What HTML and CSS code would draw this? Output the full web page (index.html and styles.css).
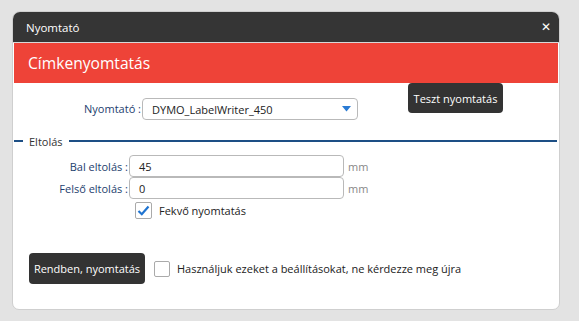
FILE: index.html
```html
<!DOCTYPE html>
<html lang="hu">
<head>
<meta charset="utf-8">
<link rel="stylesheet" href="styles.css">
</head>
<body>
<div class="dialog">
  <div class="titlebar">
    <span class="title">Nyomtató</span>
    <span class="close">✕</span>
  </div>
  <div class="header">Címkenyomtatás</div>
  <div class="printer-row">
    <label class="lbl lbl-printer">Nyomtató :</label>
    <div class="select">
      <span>DYMO_LabelWriter_450</span>
      <svg class="arrow" width="9" height="6" viewBox="0 0 9 6"><path d="M0 0H9L4.5 5.5Z" fill="#2a7bd4"/></svg>
    </div>
    <button class="btn btn-test">Teszt nyomtatás</button>
  </div>
  <div class="legend"><span>Eltolás</span></div>
  <div class="offsets">
    <label class="lbl">Bal eltolás :</label>
    <div class="input">45</div>
    <span class="unit">mm</span>
    <label class="lbl">Felső eltolás :</label>
    <div class="input">0</div>
    <span class="unit">mm</span>
  </div>
  <div class="check-row">
    <span class="cb">
      <svg width="13" height="11" viewBox="0 0 13 11"><path d="M1.5 6L4.8 9.2L11.5 1.5" fill="none" stroke="#1f74d1" stroke-width="2.2"/></svg>
    </span>
    <span class="cb-text">Fekvő nyomtatás</span>
  </div>
  <div class="footer">
    <button class="btn btn-ok">Rendben, nyomtatás</button>
    <span class="cb cb-empty"></span>
    <span class="cb-text">Használjuk ezeket a beállításokat, ne kérdezze meg újra</span>
  </div>
</div>
</body>
</html>
```

FILE: styles.css
```css
* { box-sizing: border-box; }
html, body { margin: 0; padding: 0; }
body {
  background: #e3e3e3;
  font-family: "Open Sans", "Noto Sans", sans-serif;
  font-size: 11px;
  color: #222;
  padding: 11px 0 0 12px;
  height: 321px;
  overflow: hidden;
}
.dialog {
  width: 548px;
  height: 299px;
  background: #fff;
  border: 1px solid #cfcfcf;
  border-radius: 8px 8px 7px 7px;
  overflow: hidden;
}
.titlebar {
  height: 31px;
  background: #353535;
  color: #fff;
  display: flex;
  align-items: center;
  justify-content: space-between;
  padding: 0 8px 0 13px;
  border-bottom: 1px solid #d8d8d8;
}
.title { font-size: 11.5px; }
.close { font-size: 12px; font-weight: bold; font-family: "DejaVu Sans", sans-serif; }
.header {
  margin: 0 1px;
  height: 40px;
  background: #ee4338;
  color: #fff;
  font-size: 15.6px;
  display: flex;
  align-items: center;
  padding-left: 14px;
}
.printer-row {
  display: flex;
  align-items: flex-start;
  height: 30px;
}
.lbl {
  color: #1d3e6e;
  text-align: right;
  font-size: 11px;
}
.lbl-printer {
  width: 129px;
  margin-top: 18px;
  padding-right: 1px;
}
.select {
  margin-top: 15px;
  width: 216px;
  height: 22px;
  border: 1px solid #b9b9b9;
  border-radius: 4px;
  display: flex;
  align-items: center;
  justify-content: space-between;
  padding: 0 6px 0 9px;
  color: #222;
}
.arrow { margin-top: -1px; }
.btn {
  background: #333;
  color: #fff;
  border: none;
  border-radius: 4px;
  font-family: "Open Sans", "Noto Sans", sans-serif;
  font-size: 11px;
  padding: 0;
}
.btn-test {
  margin-left: 50px;
  width: 95px;
  height: 30px;
}
.legend {
  display: flex;
  align-items: center;
  margin: 19px 2px 0 1px;
  height: 18px;
  color: #333;
}
.legend::before, .legend::after {
  content: "";
  height: 1.5px;
  background: #1d4f85;
}
.legend::before { width: 9px; }
.legend::after { flex: 1; }
.legend span { padding: 0 6px 0 6px; }
.offsets {
  margin-top: 5px;
  display: grid;
  grid-template-columns: 116px 215px auto;
  grid-auto-rows: 22px;
  align-items: center;
}
.offsets .lbl { padding-right: 1px; }
.input {
  height: 22px;
  border: 1px solid #b9b9b9;
  border-radius: 4px;
  padding-left: 9px;
  display: flex;
  align-items: center;
}
.unit {
  color: #888;
  padding-left: 4px;
}
.check-row {
  display: flex;
  align-items: center;
  margin: 2px 0 0 122px;
  height: 18px;
}
.cb {
  width: 17px;
  height: 17px;
  border: 1px solid #aaa;
  border-radius: 2px;
  display: inline-flex;
  align-items: center;
  justify-content: center;
  background: #fff;
}
.cb-text { margin-left: 7px; color: #222; }
.footer {
  display: flex;
  align-items: center;
  margin: 34px 0 0 16px;
}
.btn-ok {
  width: 116px;
  height: 31px;
}
.cb-empty { margin-left: 9px; width: 16px; height: 16px; }
```
